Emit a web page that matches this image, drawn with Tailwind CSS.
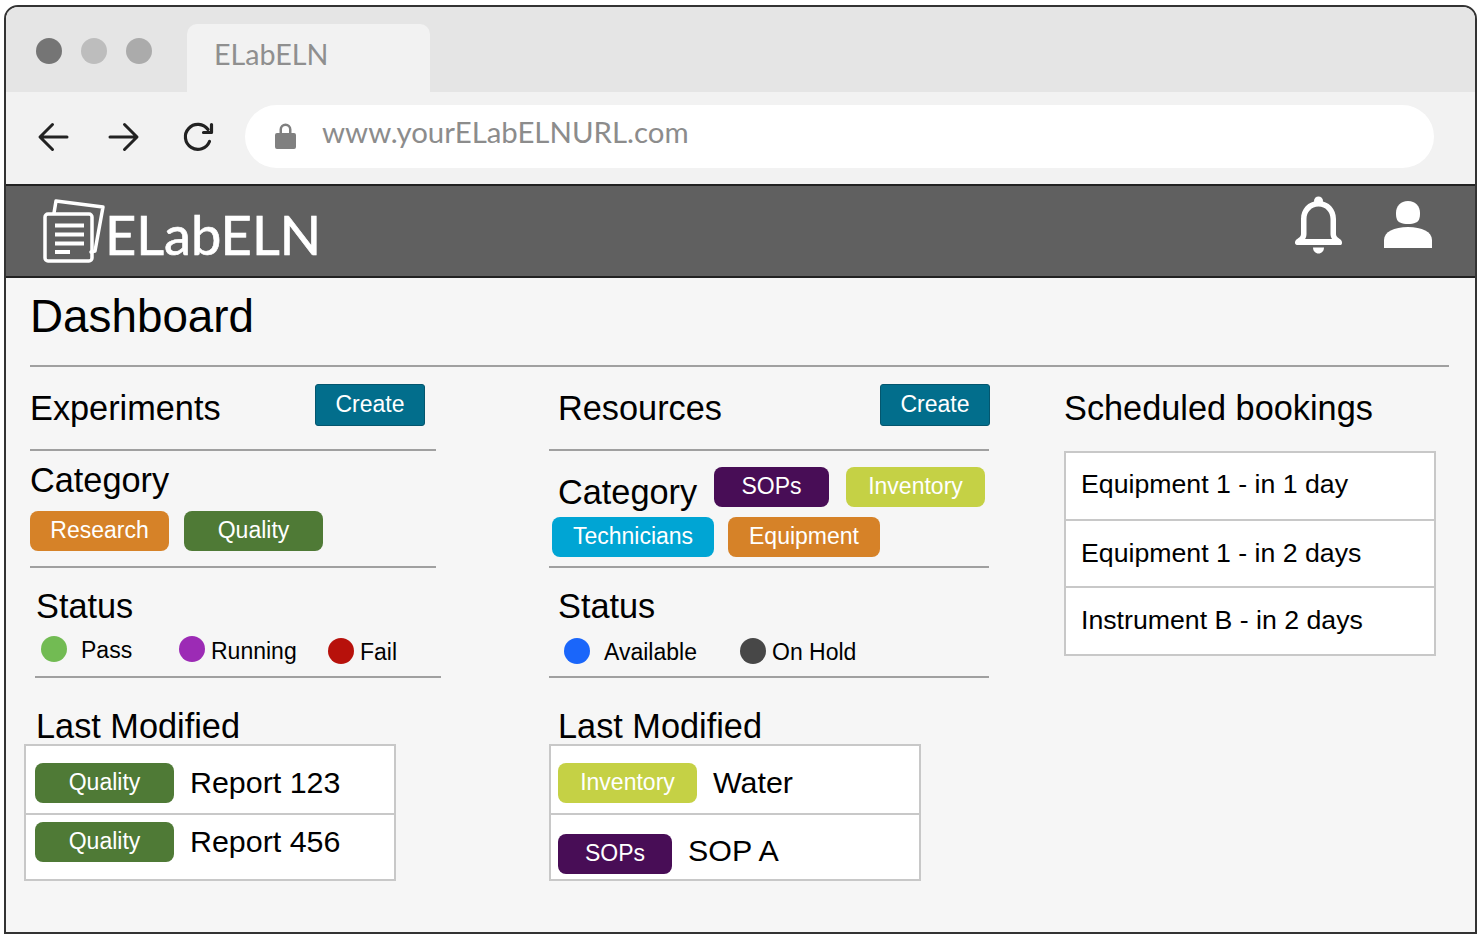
<!DOCTYPE html>
<html lang="en">
  <head>
    <meta charset="UTF-8" />
    <meta name="viewport" content="width=device-width, initial-scale=1.0" />
    <title>ELabELN</title>
    <script src="https://cdn.jsdelivr.net/npm/@tailwindcss/browser@4"></script>
  </head>
  <body class="bg-white font-['Liberation_Sans',sans-serif] text-black overflow-hidden">
    <div class="ml-[4px] mt-[5px] w-[1473px] h-[929px] border-2 border-[#333333] rounded-t-[14px] overflow-hidden bg-[#f6f6f6] flex flex-col">
      <!-- Browser tab strip -->
      <div class="h-[85px] shrink-0 bg-[#e5e5e5] flex items-start">
        <div class="flex gap-[19px] pl-[30px] pt-[31px]">
          <span class="w-[26px] h-[26px] rounded-full bg-[#757575]"></span>
          <span class="w-[26px] h-[26px] rounded-full bg-[#bdbdbd]"></span>
          <span class="w-[26px] h-[26px] rounded-full bg-[#ababab]"></span>
        </div>
        <div class="ml-[35px] mt-[17px] w-[243px] h-[68px] bg-[#f2f2f2] rounded-t-[10px] pl-[27px] pt-[10px] font-['Lato',sans-serif] text-[28.7px] leading-[40px] text-[#8f8f8f]">ELabELN</div>
      </div>

      <!-- Browser toolbar -->
      <div class="h-[92px] shrink-0 bg-[#f2f2f2] flex items-start">
        <svg class="ml-[31px] mt-[29px]" width="32" height="32" viewBox="0 0 32 32" fill="none" stroke="#222222" stroke-width="3" stroke-linecap="round" stroke-linejoin="round">
          <path d="M30 16H3.500M15.500 3.500L3 16l12.500 12.500" />
        </svg>
        <svg class="ml-[39px] mt-[29px]" width="32" height="32" viewBox="0 0 32 32" fill="none" stroke="#222222" stroke-width="3" stroke-linecap="round" stroke-linejoin="round">
          <path d="M2 16h26.500M16.500 3.500L29 16 16.500 28.500" />
        </svg>
        <svg class="ml-[43px] mt-[29px]" width="32" height="32" viewBox="0 0 32 32" fill="none" stroke="#222222" stroke-width="3.200" stroke-linecap="round" stroke-linejoin="round">
          <path d="M26.500 20.500A12.500 12.500 0 1 1 25 8.500M28.500 3.500V11.500H20.500" />
        </svg>
        <div class="ml-[30px] mt-[13px] w-[1189px] h-[63px] bg-white rounded-full flex items-start pl-[30px]">
          <svg class="mt-[18px]" width="21" height="26" viewBox="0 0 21 26" fill="#808080">
            <path d="M2 10h2.500V6.500a6 6 0 0 1 12 0V10H19a2 2 0 0 1 2 2v12a2 2 0 0 1-2 2H2a2 2 0 0 1-2-2V12a2 2 0 0 1 2-2zM7 10h7V6.500a3.500 3.500 0 0 0-7 0z" />
          </svg>
          <span class="ml-[26px] mt-[6px] font-['Lato',sans-serif] text-[29.4px] leading-[42px] text-[#8c8c8c]">www.yourELabELNURL.com</span>
        </div>
      </div>

      <!-- App header -->
      <div class="h-[94px] shrink-0 bg-[#606060] border-y-2 border-[#222222] flex items-start">
        <svg class="ml-[37px] mt-[12px]" width="62" height="66" viewBox="0 0 62 66" fill="none" stroke="white" stroke-width="3.500" stroke-linejoin="round" stroke-linecap="round">
          <path d="M11 15l2-12 47 6-8 44-4 1" />
          <rect x="2" y="16" width="47" height="47" rx="3" />
          <path stroke-width="4" stroke-linecap="butt" d="M12 27.500h29M12 36.500h29M12 45.500h29M12 54h15" />
        </svg>
        <span class="mt-[17px] font-['Lato',sans-serif] text-[54.2px] leading-[64px] text-white [-webkit-text-stroke:0.7px_white]">ELabELN</span>
        <svg class="ml-auto mt-[10px]" width="48" height="59" viewBox="0 0 48 59" fill="white">
          <circle cx="23.500" cy="5" r="4.500" />
          <path fill-rule="evenodd" d="M23.500 5C13 5 6 13 6 23v15c0 3-3 4-5 6-1.500 1.500-1.500 5 1 5h43c2.500 0 2.500-3.500 1-5-2-2-5-3-5-6V23C41 13 34 5 23.500 5zM23.500 10.500c7 0 12 5.500 12 12.500v15c0 1.800.6 3.800 1.600 5H10c1-1.200 1.500-3.200 1.500-5V23c0-7 5-12.500 12-12.500z" />
          <path d="M18 51.500h11c0 3.500-2.500 6-5.500 6s-5.500-2.500-5.500-6z" />
        </svg>
        <svg class="ml-[41px] mr-[43px] mt-[15px]" width="48" height="47" viewBox="0 0 48 47" fill="white">
          <path d="M24 0c7.500 0 12 5 12 12 0 5.500-1 8-4 9.500-2.500 1.200-5 1.500-8 1.500s-5.500-.3-8-1.500c-3-1.500-4-4-4-9.500C12 5 16.500 0 24 0z" />
          <path d="M24 26c14 0 24 5 24 13v8H0v-8c0-8 10-13 24-13z" />
        </svg>
      </div>

      <!-- Page content -->
      <div class="pl-[24px] pt-[11px] h-[87px] shrink-0 text-[45.8px] leading-[56px]">Dashboard</div>
      <div class="ml-[24px] w-[1419px] h-[2px] shrink-0 bg-[#a0a0a0]"></div>

      <div class="flex items-start">
        <!-- Experiments -->
        <div class="ml-[18px] w-[525px] shrink-0">
          <div class="ml-[6px] w-[395px] h-[82px] flex justify-between items-start">
            <span class="mt-[21px] text-[34.3px] leading-[40px]">Experiments</span>
            <button class="mt-[17px] w-[110px] h-[42px] bg-[#026e8c] border border-[#04566e] rounded-[3px] text-white text-[23px] leading-[36px] pb-[3px]">Create</button>
          </div>
          <div class="ml-[6px] w-[406px] h-[2px] bg-[#a0a0a0]"></div>
          <div class="ml-[6px] h-[115px] pt-[9px]">
            <div class="text-[34.3px] leading-[40px]">Category</div>
            <div class="mt-[11px] flex gap-[15px]">
              <span class="w-[139px] h-[40px] rounded-[8px] bg-[#d68228] text-white text-[23px] leading-[38px] text-center">Research</span>
              <span class="w-[139px] h-[40px] rounded-[8px] bg-[#4f7a36] text-white text-[23px] leading-[38px] text-center">Quality</span>
            </div>
          </div>
          <div class="ml-[6px] w-[406px] h-[2px] bg-[#a0a0a0]"></div>
          <div class="ml-[12px] h-[108px] pt-[18px]">
            <div class="text-[34.3px] leading-[40px]">Status</div>
            <div class="flex items-start text-[23px] leading-[28px]">
              <span class="ml-[5px] mt-[10px] w-[26px] h-[26px] rounded-full bg-[#72bb53]"></span>
              <span class="ml-[14px] mt-[10px] w-[98px]">Pass</span>
              <span class="mt-[10px] w-[26px] h-[26px] rounded-full bg-[#9c2bb5]"></span>
              <span class="ml-[6px] mt-[11px] w-[117px]">Running</span>
              <span class="mt-[12px] w-[26px] h-[26px] rounded-full bg-[#b7110b]"></span>
              <span class="ml-[6px] mt-[12px]">Fail</span>
            </div>
          </div>
          <div class="ml-[11px] w-[406px] h-[2px] bg-[#a0a0a0]"></div>
          <div class="ml-[12px] mt-[30px] text-[34.3px] leading-[36px]">Last Modified</div>
          <div class="w-[372px] h-[137px] border-2 border-[#c8c8c8] bg-white">
            <div class="h-[67px] flex items-start pl-[9px] pt-[17px]">
              <span class="w-[139px] h-[40px] rounded-[8px] bg-[#4f7a36] text-white text-[23px] leading-[38px] text-center">Quality</span>
              <span class="ml-[16px] text-[30.4px] leading-[38px]">Report 123</span>
            </div>
            <div class="h-[2px] bg-[#c8c8c8]"></div>
            <div class="flex items-start pl-[9px] pt-[7px]">
              <span class="w-[139px] h-[40px] rounded-[8px] bg-[#4f7a36] text-white text-[23px] leading-[38px] text-center">Quality</span>
              <span class="ml-[16px] text-[30.4px] leading-[39px]">Report 456</span>
            </div>
          </div>
        </div>

        <!-- Resources -->
        <div class="w-[515px] shrink-0">
          <div class="ml-[9px] w-[432px] h-[82px] flex justify-between items-start">
            <span class="mt-[21px] text-[34.3px] leading-[40px]">Resources</span>
            <button class="mt-[17px] w-[110px] h-[42px] bg-[#026e8c] border border-[#04566e] rounded-[3px] text-white text-[23px] leading-[36px] pb-[3px]">Create</button>
          </div>
          <div class="w-[440px] h-[2px] bg-[#a0a0a0]"></div>
          <div class="h-[115px] pt-[16px]">
            <div class="flex items-start">
              <span class="ml-[9px] mt-[5px] w-[156px] text-[34.3px] leading-[40px]">Category</span>
              <span class="w-[115px] h-[40px] rounded-[8px] bg-[#480d56] text-white text-[23px] leading-[38px] text-center">SOPs</span>
              <span class="ml-[17px] w-[139px] h-[40px] rounded-[8px] bg-[#c5d145] text-white text-[23px] leading-[38px] text-center">Inventory</span>
            </div>
            <div class="mt-[5px] flex items-start">
              <span class="ml-[3px] w-[162px] h-[40px] rounded-[8px] bg-[#00a5d4] text-white text-[23px] leading-[38px] text-center">Technicians</span>
              <span class="ml-[14px] w-[152px] h-[40px] rounded-[8px] bg-[#d68228] text-white text-[23px] leading-[38px] text-center">Equipment</span>
            </div>
          </div>
          <div class="w-[440px] h-[2px] bg-[#a0a0a0]"></div>
          <div class="h-[108px] pt-[18px]">
            <div class="ml-[9px] text-[34.3px] leading-[40px]">Status</div>
            <div class="flex items-start text-[23px] leading-[28px]">
              <span class="ml-[15px] mt-[12px] w-[26px] h-[26px] rounded-full bg-[#1a66fa]"></span>
              <span class="ml-[14px] mt-[12px] w-[136px]">Available</span>
              <span class="mt-[12px] w-[26px] h-[26px] rounded-full bg-[#474747]"></span>
              <span class="ml-[6px] mt-[12px]">On Hold</span>
            </div>
          </div>
          <div class="w-[440px] h-[2px] bg-[#a0a0a0]"></div>
          <div class="ml-[9px] mt-[30px] text-[34.3px] leading-[36px]">Last Modified</div>
          <div class="w-[372px] h-[137px] border-2 border-[#c8c8c8] bg-white">
            <div class="h-[67px] flex items-start pl-[7px] pt-[17px]">
              <span class="w-[139px] h-[40px] rounded-[8px] bg-[#c5d145] text-white text-[23px] leading-[38px] text-center">Inventory</span>
              <span class="ml-[16px] text-[30.4px] leading-[38px]">Water</span>
            </div>
            <div class="h-[2px] bg-[#c8c8c8]"></div>
            <div class="flex items-start pl-[7px] pt-[19px]">
              <span class="w-[114px] h-[40px] rounded-[8px] bg-[#480d56] text-white text-[23px] leading-[38px] text-center">SOPs</span>
              <span class="ml-[16px] text-[30.4px] leading-[32px]">SOP A</span>
            </div>
          </div>
        </div>

        <!-- Scheduled bookings -->
        <div class="w-[372px] shrink-0">
          <div class="h-[84px] pt-[21px] text-[34.3px] leading-[40px]">Scheduled bookings</div>
          <div class="h-[205px] border-2 border-[#c8c8c8] bg-white text-[26.7px] leading-[36px]">
            <div class="h-[66px] pl-[15px] pt-[13px]">Equipment 1 - in 1 day</div>
            <div class="h-[2px] bg-[#c8c8c8]"></div>
            <div class="h-[65px] pl-[15px] pt-[14px]">Equipment 1 - in 2 days</div>
            <div class="h-[2px] bg-[#c8c8c8]"></div>
            <div class="pl-[15px] pt-[14px]">Instrument B - in 2 days</div>
          </div>
        </div>
      </div>
    </div>
  </body>
</html>
